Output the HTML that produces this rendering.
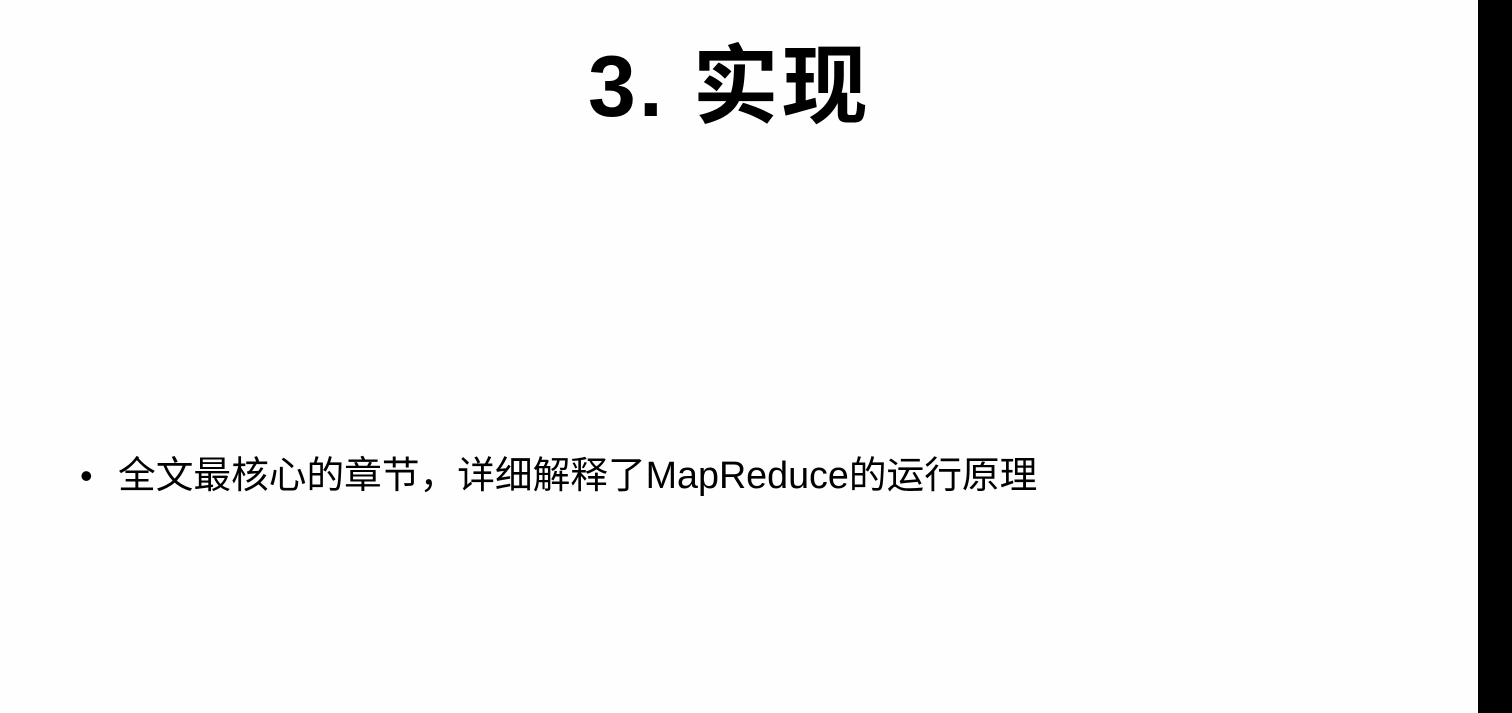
<!DOCTYPE html>
<html><head><meta charset="utf-8"><style>
html,body{margin:0;padding:0;width:1512px;height:713px;overflow:hidden;background:#fefefe;font-family:"Liberation Sans","Noto Sans CJK SC",sans-serif;color:#000}
.bar{position:absolute;left:1478px;top:0;width:34px;height:713px;background:#000}
h1{position:absolute;left:588px;top:35px;margin:0;font-size:86px;font-weight:700;line-height:104px;white-space:nowrap;letter-spacing:3px}
.b{position:absolute;left:80px;top:451px;font-size:37.7px;line-height:48px;white-space:nowrap}
.b span{display:inline-block;width:38px;font-size:36px}
</style></head><body>
<div class="bar"></div>
<h1>3. 实现</h1>
<div class="b"><span>•</span>全文最核心的章节，详细解释了MapReduce的运行原理</div>
</body></html>
